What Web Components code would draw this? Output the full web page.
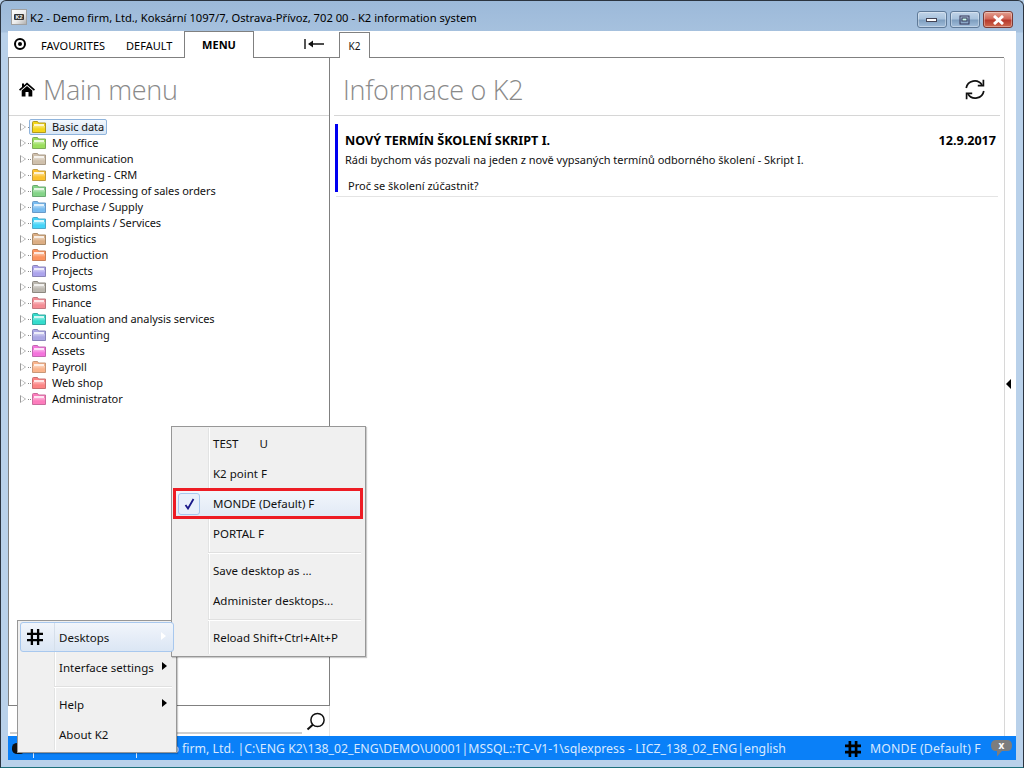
<!DOCTYPE html>
<html><head><meta charset="utf-8">
<style>
html,body{margin:0;padding:0;width:1024px;height:768px;overflow:hidden;background:#b9d1ea}
body{font-family:"Noto Sans","Open Sans",sans-serif;font-size:11px;color:#111}
</style></head><body>
<k2-window>
  <k2-titlebar slot="title">K2 - Demo firm, Ltd., Koksární 1097/7, Ostrava-Přívoz, 702 00 - K2 information system</k2-titlebar>
  <k2-left slot="left">
    <k2-tabs></k2-tabs>
    <k2-tree></k2-tree>
  </k2-left>
  <k2-right slot="right"></k2-right>
  <k2-status slot="status"></k2-status>
  <k2-popup slot="popups" id="main-pop"></k2-popup>
  <k2-popup slot="popups" id="sub-pop"></k2-popup>
</k2-window>
<script>
const hash=(s,w=3)=>`<svg width="${s}" height="${s}" viewBox="0 0 18 18" fill="none" stroke="#000" stroke-width="${w}"><path d="M5.5 0V18M12.5 0V18M0 5.5H18M0 12.5H18"/></svg>`;
function def(name,css,html,after){
  customElements.define(name,class extends HTMLElement{
    constructor(){super();const r=this.attachShadow({mode:'open'});r.innerHTML=`<style>${css}</style>${typeof html==='function'?html(this):html}`;if(after)after(r,this)}
  });
}
def('k2-window',`
:host{display:block;position:relative;width:1024px;height:768px;box-sizing:border-box;border:1px solid #2b3440;border-bottom-color:#1d6f7a;border-radius:6px 6px 0 0;background:linear-gradient(#9cb9d9 0,#a6c1de 31px,#b9d1ea 32px,#b9d1ea 100%);overflow:hidden}
.wrap{display:flex;flex-direction:column;height:100%}
.client{flex:1;display:flex;margin:0 7px;background:#fff;min-height:0}
.status{margin:0 7px 7px}
`,`<div class="wrap"><slot name="title"></slot><div class="client"><slot name="left"></slot><slot name="right"></slot></div><div class="status"><slot name="status"></slot></div></div><slot name="popups"></slot>`);

def('k2-titlebar',`
:host{display:flex;align-items:center;height:30px;padding:2px 10px 0 10px;box-sizing:border-box;flex:none;font-size:11.2px;color:#000}
.ic{width:16px;height:16px;margin:0 3px 0 0;background:linear-gradient(135deg,#fff,#ececec 55%,#a8a8a8);display:flex;align-items:center;justify-content:center;box-shadow:inset 0 0 0 1px #a0a0a0}
.ic span{display:block;background:#333;color:#fff;font:bold 5.5px/6px "Liberation Sans",sans-serif;padding:0 1px;border-radius:1px}
.t{flex:1;white-space:nowrap}
.b{display:flex;gap:3px;align-self:flex-start;margin-top:8px}
.b div{width:30px;height:17px;box-sizing:border-box;border:1px solid #5f7a98;border-radius:3px;background:linear-gradient(#c0d4e8 0,#a9c3dd 45%,#7f9fc0 55%,#a2bedb 100%);display:flex;align-items:center;justify-content:center;box-shadow:inset 0 0 0 1px rgba(255,255,255,.35)}
.b .c{background:linear-gradient(#e3a090 0,#d2695a 45%,#b83a2c 55%,#cf6a50 100%);border-color:#7a3a34}
`,`<div class="ic"><span>K2</span></div><div class="t"><slot></slot></div>
<div class="b"><div><svg width="12" height="6"><rect x=".5" y="1.5" width="10" height="3" fill="#fff" stroke="#445"/></svg></div>
<div><svg width="12" height="10"><rect x="1" y="1" width="9" height="8" fill="none" stroke="#335" /><rect x="3" y="3" width="5" height="3" fill="#cfe" stroke="#335"/></svg></div>
<div class="c"><svg width="13" height="10" viewBox="0 0 13 10"><path d="M2 1L11 9M11 1L2 9" stroke="#fff" stroke-width="3"/></svg></div></div>`);

def('k2-left',`
:host{display:flex;flex-direction:column;width:322px;flex:none;min-height:0}
.s{display:flex;align-items:center;height:30px;flex:none;box-sizing:border-box;position:relative;justify-content:flex-end;border-right:1px solid #e6e6e6}
.s svg{margin-right:3px}
.bar{position:absolute;left:2px;right:27px;bottom:2px;height:2px;background:#cfcfcf}
`,`<slot></slot><div class="s"><svg width="20" height="20" viewBox="0 0 20 20" fill="none" stroke="#111" stroke-width="1.5"><circle cx="11.5" cy="9" r="6.6"/><path d="M7 13.5L1.5 18.5" stroke-width="2"/></svg><div class="bar"></div></div>`);

def('k2-tabs',`
:host{display:flex;align-items:flex-end;height:27px;flex:none;position:relative;box-sizing:border-box;font-size:11px;color:#000}
.line{position:absolute;left:0;right:0;bottom:0;height:1px;background:#808080}
.dot{position:absolute;left:6px;top:7px;width:12px;height:12px;box-sizing:border-box;border:2px solid #000;border-radius:50%}
.dot:after{content:"";position:absolute;left:2px;top:2px;width:4px;height:4px;border-radius:50%;background:#000}
.t{position:absolute;top:7px;white-space:nowrap}
.act{position:absolute;left:176px;top:0;width:70px;height:27px;box-sizing:border-box;border:1px solid #808080;border-bottom:0;background:#fff;z-index:1;text-align:center;font-weight:700;line-height:26px}
.arr{position:absolute;left:296px;top:7px}
`,`<div class="line"></div><div class="dot"></div><div class="t" style="left:33px">FAVOURITES</div><div class="t" style="left:118px">DEFAULT</div><div class="act">MENU</div>
<svg class="arr" width="20" height="12" viewBox="0 0 20 12"><path d="M1 1V11" stroke="#555" stroke-width="2"/><path d="M5 6H20" stroke="#111" stroke-width="1.6"/><path d="M4 6L9 2.5V9.5Z" fill="#111"/></svg>`);

def('k2-folder',`
:host{display:block;width:14px;height:12px;flex:none}
svg{display:block}
`,h=>{const c=h.getAttribute('c'),e=h.getAttribute('e')||c,id='g'+c.slice(1);return `<svg width="14" height="12" viewBox="0 0 14 12"><defs><linearGradient id="${id}" x1="0" y1="0" x2="0" y2="1"><stop offset="0" stop-color="${c}" stop-opacity=".6"/><stop offset=".5" stop-color="${c}"/><stop offset="1" stop-color="${c}"/></linearGradient></defs><path d="M.5 3V1.5Q.5.5 1.5.5H5.5L6.5 2H13.5V11.5H.5Z" fill="${c}" stroke="${e}"/><rect x="2" y="3" width="10" height="2" fill="#fff" opacity=".8"/><rect x="1" y="5" width="12" height="6" fill="#fff"/><rect x="1" y="5" width="12" height="6" fill="url(#${id})"/></svg>`});

const items=[["Basic data","#f4d61a","#b09a20"],["My office","#9ade5c","#7cab58"],["Communication","#cfc0ac","#a89a88"],["Marketing - CRM","#fcc22c","#c09a40"],["Sale / Processing of sales orders","#84d488","#6aa870"],["Purchase / Supply","#78bcf0","#6a9ac8"],["Complaints / Services","#44d4f8","#50a8c8"],["Logistics","#dcae84","#a88a68"],["Production","#fc9460","#c88058"],["Projects","#aca4ec","#8a84b8"],["Customs","#bcb8b0","#8c8880"],["Finance","#f48c94","#c07880"],["Evaluation and analysis services","#34dccc","#38a8a0"],["Accounting","#aca8e4","#8884b8"],["Assets","#f474dc","#c068b0"],["Payroll","#fab48c","#c89878"],["Web shop","#fc8484","#c87070"],["Administrator","#fc7cbc","#c86c9c"]];
def('k2-tree',`
:host{flex:1;display:flex;flex-direction:column;min-height:0;box-sizing:border-box;border-left:1px solid #808080;border-right:1px solid #808080;border-bottom:1px solid #808080;}
.h{height:58px;flex:none;box-sizing:border-box;border-bottom:1px solid #d6d6d6;display:flex;align-items:center;padding:5px 0 0 10px}
.h h1{margin:0 0 0 8px;font:300 27px "Open Sans",sans-serif;color:#8a8a8a;letter-spacing:-.3px;white-space:nowrap}
.l{padding:3px 0 0 9px}
.r{display:flex;align-items:center;height:16px;position:relative;letter-spacing:-.06px}
.tri{width:0;height:0;border-style:solid;border-width:4.5px 0 4.5px 6px;border-color:transparent transparent transparent #9a9a9a;position:relative;margin-right:2px;margin-left:2px}
.tri:after{content:"";position:absolute;left:-5px;top:-3px;border-style:solid;border-width:3px 0 3px 4px;border-color:transparent transparent transparent #fff}
.d{width:4px;height:1px;margin-right:0;background:repeating-linear-gradient(90deg,#888 0 1px,transparent 1px 2px)}
.x{margin-left:4px;padding:0 2px;height:14px;line-height:14px;white-space:nowrap;position:relative}
.sel:before{content:"";position:absolute;left:11px;top:0;width:78px;height:16px;box-sizing:border-box;border:1px solid #8fb4dc;border-radius:2px;background:linear-gradient(#f3f8fd,#d8e6f5)}
.sel k2-folder,.sel .x{position:relative;z-index:1}
`,`<div class="h"><svg width="16" height="15" viewBox="0 0 16 15"><path d="M8 .5L16 7.6L14.9 8.8L8 2.8L1.1 8.8L0 7.6L3 5V1.5H5V3.2Z" fill="#000"/><path d="M2.7 8.6L8 4L13.3 8.6V14.5H9.5V10H6.5V14.5H2.7Z" fill="#000"/></svg><h1>Main menu</h1></div>
<div class="l">${items.map((i,n)=>`<div class="r ${n?'':'sel'}"><div class="tri"></div><div class="d"></div><k2-folder c="${i[1]}" e="${i[2]}"></k2-folder><div class="x">${i[0]}</div></div>`).join('')}</div>`);

def('k2-right',`
:host{flex:1;display:flex;flex-direction:column;min-width:0;position:relative}
.top{height:27px;flex:none;position:relative}
.tab{position:absolute;left:9px;top:1px;width:31px;height:26px;box-sizing:border-box;border:1px solid #808080;border-bottom:0;background:#fff;z-index:1;text-align:center;line-height:26px;font-size:10px}
.line{position:absolute;left:0;right:12px;bottom:0;height:1px;background:#808080}
.pane{flex:1;margin-right:11px;border-right:1px solid #d8d8d8;display:flex;flex-direction:column;padding-left:4px;box-sizing:border-box}
.h{height:58px;flex:none;box-sizing:border-box;border-bottom:1px solid #d6d6d6;margin-right:4px;display:flex;align-items:center;justify-content:space-between;padding:5px 15px 0 9px}
h1{margin:0;font:300 27px "Open Sans",sans-serif;color:#8a8a8a;letter-spacing:-.25px}
.news{margin:8px 4px 4px 1px;border-left:3px solid #0000f0;height:68px;box-sizing:border-box;padding:8px 4px 0 7px;position:relative}
.row{display:flex;justify-content:space-between;font-weight:700;font-size:12.6px;color:#000;line-height:17px}
.p{margin-top:3px;line-height:15px;white-space:nowrap}
.q{position:absolute;left:10px;top:54px;line-height:15px}
.rule{height:1px;background:#e4e4e4;margin:0 6px 0 2px}
.side{position:absolute;right:3px;top:0;bottom:0;display:flex;align-items:center}
.side i{display:block;border-style:solid;border-width:5px 5px 5px 0;border-color:transparent #000 transparent transparent;margin:0 2px 0 0}
svg{display:block}
`,`<div class="top"><div class="line"></div><div class="tab">K2</div></div>
<div class="pane"><div class="h"><h1>Informace o K2</h1>
<svg width="20" height="21" viewBox="0 0 20 21" fill="none" stroke="#111" stroke-width="1.7"><path d="M1.2 9A8.6 8.6 0 0 1 17 6"/><path d="M18.4 .8V6.6H12.8"/><path d="M18.8 12A8.6 8.6 0 0 1 3 15"/><path d="M1.6 20.2V14.4H7.2"/></svg></div>
<div class="news"><div class="row"><span>NOVÝ TERMÍN ŠKOLENÍ SKRIPT I.</span><span>12.9.2017</span></div>
<div class="p">Rádi bychom vás pozvali na jeden z nově vypsaných termínů odborného školení - Skript I.</div><div class="q">Proč se školení zúčastnit?</div></div><div class="rule"></div></div>
<div class="side"><i></i></div>`);

def('k2-status',`
:host{display:flex;align-items:center;height:24px;background:#0a80f8;color:#d8e9ff;font-size:12.3px;white-space:nowrap;position:relative;overflow:hidden}
.ic{position:absolute;left:4px;top:7px;width:13px;height:11px;background:#111;border-radius:40%}
.a{position:absolute;left:136px}
.sp{position:absolute;top:9px;height:13px;width:1px;background:#d8e9ff}
.h{position:absolute;left:837px;top:5px;display:flex}
.m{position:absolute;left:862px;letter-spacing:.15px}
.b{position:absolute;left:982px;top:3px}
`,`<div class="ic"></div><i class="sp" style="left:25px"></i><i class="sp" style="left:128px"></i><div class="a">Demo firm, Ltd. |C:\\ENG K2\\138_02_ENG\\DEMO\\U0001|MSSQL::TC-V1-1\\sqlexpress - LICZ_138_02_ENG|english</div>
<div class="h">${hash(16)}</div><div class="m">MONDE (Default) F</div>
<svg class="b" width="23" height="19" viewBox="0 0 23 19"><path d="M6 1H17Q22 1 22 6.5T17 12H12L7 17.5V12H6Q1 12 1 6.5T6 1Z" fill="#7d7d7d"/><text x="11.5" y="10" font-size="10" font-weight="700" text-anchor="middle" fill="#fff" font-family="Noto Sans">x</text></svg>`);

const mainItems=[{t:'Desktops',arr:1,hot:1,icon:1},{t:'Interface settings',arr:1},{sep:1},{t:'Help',arr:1},{t:'About K2'}];
const subItems=[{t:'TEST&nbsp;&nbsp;&nbsp;&nbsp;&nbsp;&nbsp;&nbsp;U'},{t:'K2 point F'},{t:'MONDE (Default) F',check:1},{t:'PORTAL F'},{sep:1},{t:'Save desktop as ...'},{t:'Administer desktops...'},{sep:1},{t:'Reload Shift+Ctrl+Alt+P'}];
def('k2-popup',`
:host{display:block;position:absolute;box-sizing:border-box;border:1px solid #979797;background:#f0f0f0;padding:2px;box-shadow:1px 1px 1px rgba(0,0,0,.2);--g:34px}
:host(#main-pop){left:16px;top:619px;width:160px;height:133px;padding-top:1px}
:host(#sub-pop){left:170px;top:425px;width:195px;height:231px;padding-top:1px}
.m{position:relative;height:100%}
.m:before{content:"";position:absolute;left:var(--g);top:0;bottom:0;width:1px;background:#fff;border-left:1px solid #e2e3e3;z-index:0}
.r{position:relative;display:flex;align-items:center;height:30px;padding-left:calc(var(--g) + 5px);white-space:nowrap;font-size:11.5px;box-sizing:border-box;z-index:1;color:#111}
.hot{background:linear-gradient(#f1f5fb,#dbe6f4);border:1px solid #a8c8ee;border-radius:3px;padding-left:calc(var(--g) + 4px)}
.hot:after{content:"";position:absolute;left:calc(var(--g) - 1px);top:0;bottom:0;width:1px;background:#d6dfea}
.sel{background:linear-gradient(#f4f8fc,#e0e9f5);z-index:2}
.sel:after{content:"";position:absolute;left:-1px;right:0;top:0;bottom:-1px;box-sizing:border-box;border:3px solid #ed1c24}
.sep{height:2px;margin:4px 2px 1px var(--g);background:#e0e0e0;border-bottom:1px solid #fff;box-sizing:border-box;position:relative;z-index:1}
.arr{position:absolute;right:7px;top:50%;margin-top:-5px;border-style:solid;border-width:4.5px 0 4.5px 5px;border-color:transparent transparent transparent #000}
.hot .arr{border-left-color:#fff}
.ck{position:absolute;left:4px;top:5px;width:22px;height:22px;box-sizing:border-box;border:1px solid #a8c8ee;border-radius:3px;background:#e8f0fb;display:flex;align-items:center;justify-content:center}
.ic{position:absolute;left:6px;top:6px}
`,h=>{const list=h.id==='main-pop'?mainItems:subItems;
  return `<div class="m">${list.map(i=>i.sep?'<div class="sep"></div>':`<div class="r ${i.hot?'hot':''} ${i.check?'sel':''}">${i.icon?`<span class="ic">${hash(16,2.6)}</span>`:''}${i.check?'<span class="ck"><svg width="11" height="12" viewBox="0 0 11 12"><path d="M1.5 7L4 10.5L9.5 1" fill="none" stroke="#1a1a8a" stroke-width="1.8"/></svg></span>':''}<span>${i.t}</span>${i.arr?'<i class="arr"></i>':''}</div>`).join('')}</div>`});
</script>
</body></html>
